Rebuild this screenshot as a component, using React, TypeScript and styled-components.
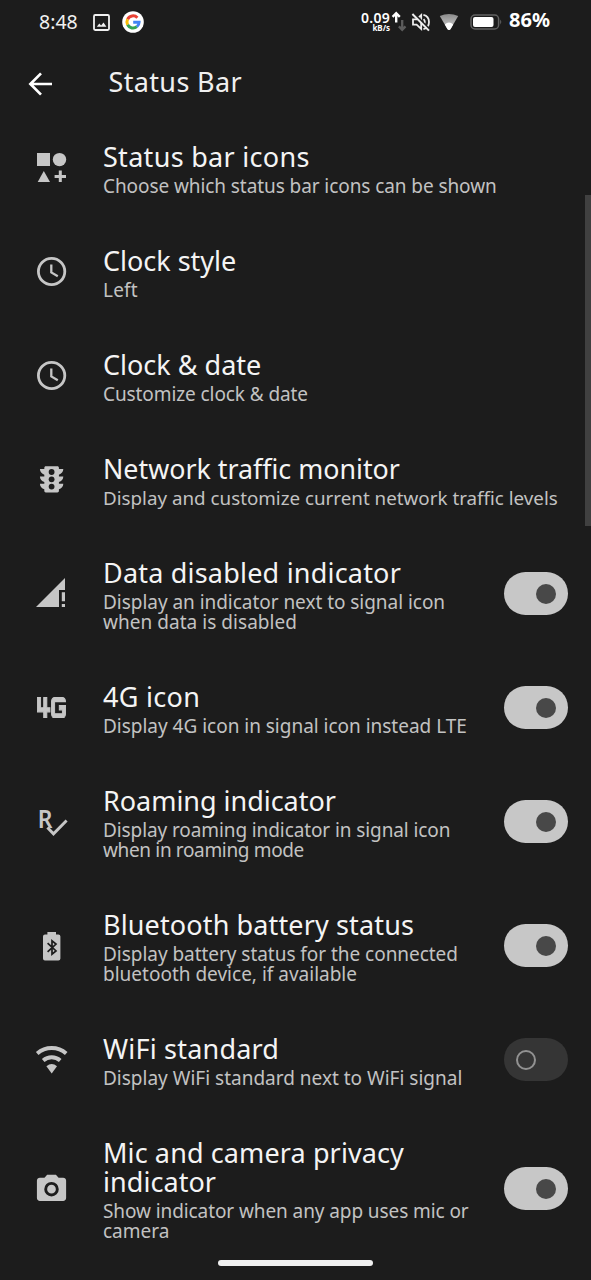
import React from 'react';
import styled, { createGlobalStyle } from 'styled-components';
import { Md4gMobiledata } from 'react-icons/md';

const bg = '#1c1c1c';
const iconGray = '#c6c6c6';

const GlobalStyle = createGlobalStyle`
  body {
    margin: 0;
    background: ${bg};
    font-family: 'Noto Sans', 'Open Sans', sans-serif;
  }
`;

const Screen = styled.main`
  position: relative;
  width: 591px;
  height: 1280px;
  overflow: hidden;
  background: ${bg};
`;

const StatusBar = styled.div`
  display: flex;
  justify-content: space-between;
  height: 44px;
  padding: 0 41px 0 39px;
`;

const StatusGroup = styled.div`
  display: flex;
  align-items: center;
  height: 44px;
`;

const Time = styled.span`
  width: 54px;
  padding-bottom: 1px;
  font-size: 19.5px;
  line-height: 24px;
  color: #f0f0f0;
`;

const Speed = styled.div`
  display: flex;
  flex-direction: column;
  align-items: flex-end;
  width: 31px;
  color: #fff;
  font-weight: 600;
`;

const SpeedValue = styled.span`
  font-size: 14px;
  line-height: 12px;
  letter-spacing: 0.3px;
`;

const SpeedUnit = styled.span`
  font-size: 8px;
  line-height: 8px;
  font-weight: 700;
`;

const Percent = styled.span`
  width: 41px;
  margin-left: 6px;
  padding-bottom: 4px;
  font-size: 20px;
  line-height: 24px;
  font-weight: 700;
  color: #fff;
`;

const Glyph = styled.svg<{ $gap?: number }>`
  display: block;
  flex: none;
  margin-left: ${(p) => p.$gap ?? 0}px;
`;

const Header = styled.header`
  box-sizing: border-box;
  display: flex;
  align-items: center;
  height: 71px;
  padding: 9px 0 0 28px;
`;

const PageTitle = styled.h1`
  margin: 0 0 0 54.5px;
  padding-bottom: 4px;
  font-size: 27px;
  line-height: 30px;
  font-weight: 400;
  letter-spacing: 0.35px;
  color: #f0f0f0;
`;

const List = styled.ul`
  display: flex;
  flex-direction: column;
  margin: 0;
  padding: 0;
  list-style: none;
`;

const Item = styled.li`
  display: flex;
  align-items: center;
  padding: 0 23px 0 34px;
`;

const IconSlot = styled.div`
  display: flex;
  flex: none;
  width: 69px;
  color: ${iconGray};
`;

const Labels = styled.div`
  display: flex;
  flex: 1;
  flex-direction: column;
  min-width: 0;
  padding: 27px 0 23px;
`;

const TitleLine = styled.span<{ $track?: number; $size?: number }>`
  font-size: ${(p) => p.$size ?? 27}px;
  line-height: 29px;
  letter-spacing: ${(p) => (p.$track ? `${p.$track}px` : 'normal')};
  white-space: nowrap;
  color: #f4f4f4;
`;

const Summary = styled.div`
  display: flex;
  flex-direction: column;
  margin-top: 5px;
`;

const SummaryLine = styled.span<{ $track?: number; $size?: number }>`
  font-size: ${(p) => p.$size ?? 19}px;
  line-height: 20px;
  letter-spacing: ${(p) => (p.$track ? `${p.$track}px` : 'normal')};
  white-space: nowrap;
  color: #c2c2c2;
`;

const Track = styled.button<{ $on: boolean }>`
  display: flex;
  flex: none;
  align-items: center;
  justify-content: ${(p) => (p.$on ? 'flex-end' : 'flex-start')};
  width: 64px;
  height: 43px;
  margin-top: 1px;
  padding: 1px 12px 0;
  border: 0;
  border-radius: 22px;
  background: ${(p) => (p.$on ? '#c7c7c7' : '#353535')};
`;

const Knob = styled.span<{ $on: boolean }>`
  box-sizing: border-box;
  flex: none;
  width: 20px;
  height: 20px;
  border-radius: 50%;
  border: ${(p) => (p.$on ? '0' : '2px solid #929292')};
  background: ${(p) => (p.$on ? '#484848' : 'transparent')};
`;

const ScrollThumb = styled.div`
  position: absolute;
  top: 195px;
  right: 0;
  width: 6px;
  height: 331px;
  background: #404040;
`;

const HomePill = styled.div`
  position: absolute;
  bottom: 14px;
  left: 218px;
  width: 155px;
  height: 6px;
  border-radius: 3px;
  background: #f0f0f0;
`;

const FourG = styled(Md4gMobiledata)`
  width: 29px;
  height: 21.5px;
  margin: 1px 0 0 3px;
`;

const Icon = ({ children }: { children: React.ReactNode }) => (
  <Glyph width="36" height="36" viewBox="0 0 36 36" fill="currentColor">
    {children}
  </Glyph>
);

const ShapesIcon = () => (
  <Icon>
    <rect x="3" y="4" width="13" height="13" />
    <circle cx="25.5" cy="10.6" r="6.7" />
    <path d="M9.8 22L16 33H3.7Z" />
    <path d="M26.3 21.5V33.1M20.6 27.4H32" stroke="currentColor" strokeWidth="3" />
  </Icon>
);

const ClockIcon = () => (
  <Icon>
    <circle cx="17.6" cy="18.5" r="13.2" fill="none" stroke="currentColor" strokeWidth="2.8" />
    <path d="M17.3 11.5V19.4L23.8 23.2" fill="none" stroke="currentColor" strokeWidth="2.3" />
  </Icon>
);

const TrafficIcon = () => (
  <Icon>
    <path
      transform="translate(0.1 0.8) scale(1.46)"
      d="M20 10h-3V8.86c1.72-.45 3-2 3-3.86h-3V4c0-.55-.45-1-1-1H8c-.55 0-1 .45-1 1v1H4c0 1.86 1.28 3.41 3 3.86V10H4c0 1.86 1.28 3.41 3 3.86V15H4c0 1.86 1.28 3.41 3 3.86V20c0 .55.45 1 1 1h8c.55 0 1-.45 1-1v-1.14c1.72-.45 3-2 3-3.86h-3v-1.14c1.72-.45 3-2 3-3.86z"
    />
    <g fill={bg}>
      <circle cx="17.6" cy="11" r="2.9" />
      <circle cx="17.6" cy="18.3" r="2.9" />
      <circle cx="17.6" cy="25.6" r="2.9" />
    </g>
  </Icon>
);

const SignalIcon = () => (
  <Icon>
    <path d="M2 32L31 3V15H25V32Z" />
    <path d="M27.8 17.3H31V26.3H27.8ZM27.8 29H31V32H27.8Z" />
  </Icon>
);

const FourGIcon = () => (
  <FourG
    viewBox="2.7 6.7 18.6 10.6"
    preserveAspectRatio="none"
    stroke="currentColor"
    strokeWidth="0.6"
  />
);

const RoamingIcon = () => (
  <Icon>
    <text transform="translate(3.8 24.8) scale(0.88 1)" fontSize="26" fontWeight="600">
      R
    </text>
    <path d="M12 23.2L19.5 30.8L31.6 18.2" fill="none" stroke={bg} strokeWidth="2.4" />
    <path d="M13.4 24.4L19.5 30.8L32.6 17.6" fill="none" stroke="currentColor" strokeWidth="2.9" />
  </Icon>
);

const BatteryBluetoothIcon = () => (
  <Icon>
    <path d="M13.4 5H22V7.6H24.4Q26.4 7.6 26.4 9.6V31.4Q26.4 33.4 24.4 33.4H11Q9 33.4 9 31.4V9.6Q9 7.6 11 7.6H13.4Z" />
    <path
      d="M13.6 16.1L22 24L18 27.2V13.8L22 17L13.6 24.9"
      fill="none"
      stroke={bg}
      strokeWidth="1.7"
    />
  </Icon>
);

const WifiIcon = () => (
  <Icon>
    <g fill="none" stroke="currentColor" strokeWidth="4">
      <path d="M3.2 12.4A22.4 22.4 0 0 1 32.2 12.4" />
      <path d="M9.2 19.4A13 13 0 0 1 26.2 19.4" />
    </g>
    <path d="M12.4 25.2Q17.7 21 23 25.2L17.7 32.6Z" />
  </Icon>
);

const CameraIcon = () => (
  <Icon>
    <path
      transform="translate(0 1.8) scale(1.46)"
      d="M9 2L7.17 4H4c-1.1 0-2 .9-2 2v12c0 1.1.9 2 2 2h16c1.1 0 2-.9 2-2V6c0-1.1-.9-2-2-2h-3.17L15 2z"
    />
    <circle cx="17.5" cy="19.2" r="5.8" fill="none" stroke={bg} strokeWidth="2.9" />
  </Icon>
);

type Line = { text: string; track?: number; size?: number };
type Setting = { icon: React.ReactNode; title: Line[]; summary: Line[]; on?: boolean };

const settings: Setting[] = [
  {
    icon: <ShapesIcon />,
    title: [{ text: 'Status bar icons', track: 0.3 }],
    summary: [{ text: 'Choose which status bar icons can be shown', track: -0.08 }],
  },
  {
    icon: <ClockIcon />,
    title: [{ text: 'Clock style', track: -0.02 }],
    summary: [{ text: 'Left', track: 0.2 }],
  },
  {
    icon: <ClockIcon />,
    title: [{ text: 'Clock & date' }],
    summary: [{ text: 'Customize clock & date', track: -0.09 }],
  },
  {
    icon: <TrafficIcon />,
    title: [{ text: 'Network traffic monitor', size: 26.8 }],
    summary: [{ text: 'Display and customize current network traffic levels', size: 18.8 }],
  },
  {
    icon: <SignalIcon />,
    title: [{ text: 'Data disabled indicator', track: 0.2 }],
    summary: [
      { text: 'Display an indicator next to signal icon', track: -0.04 },
      { text: 'when data is disabled', track: 0.04 },
    ],
    on: true,
  },
  {
    icon: <FourGIcon />,
    title: [{ text: '4G icon', track: 0.3 }],
    summary: [{ text: 'Display 4G icon in signal icon instead LTE', track: -0.02 }],
    on: true,
  },
  {
    icon: <RoamingIcon />,
    title: [{ text: 'Roaming indicator', track: -0.03 }],
    summary: [
      { text: 'Display roaming indicator in signal icon', track: -0.1 },
      { text: 'when in roaming mode', track: -0.35 },
    ],
    on: true,
  },
  {
    icon: <BatteryBluetoothIcon />,
    title: [{ text: 'Bluetooth battery status', track: 0.13 }],
    summary: [
      { text: 'Display battery status for the connected', track: -0.04 },
      { text: 'bluetooth device, if available' },
    ],
    on: true,
  },
  {
    icon: <WifiIcon />,
    title: [{ text: 'WiFi standard', track: 0.2 }],
    summary: [{ text: 'Display WiFi standard next to WiFi signal' }],
    on: false,
  },
  {
    icon: <CameraIcon />,
    title: [
      { text: 'Mic and camera privacy', track: 0.11 },
      { text: 'indicator', track: 0.05 },
    ],
    summary: [{ text: 'Show indicator when any app uses mic or', track: -0.09 }, { text: 'camera' }],
    on: true,
  },
];

const SettingRow = ({ icon, title, summary, on }: Setting) => (
  <Item>
    <IconSlot>{icon}</IconSlot>
    <Labels>
      {title.map((l) => (
        <TitleLine key={l.text} $track={l.track} $size={l.size}>
          {l.text}
        </TitleLine>
      ))}
      <Summary>
        {summary.map((l) => (
          <SummaryLine key={l.text} $track={l.track} $size={l.size}>
            {l.text}
          </SummaryLine>
        ))}
      </Summary>
    </Labels>
    {on !== undefined && (
      <Track $on={on} role="switch" aria-checked={on} aria-label={title[0].text}>
        <Knob $on={on} />
      </Track>
    )}
  </Item>
);

export default function App() {
  return (
    <Screen>
      <GlobalStyle />
      <StatusBar>
        <StatusGroup>
          <Time>8:48</Time>
          <Glyph width="17" height="17" viewBox="0 0 17 17">
            <rect x="1" y="1" width="15" height="15" rx="1.2" fill="none" stroke="#f0f0f0" strokeWidth="1.8" />
            <path d="M3.8 12.8L6.3 9.6L8.1 11.5L10.5 8.5L13.4 12.8Z" fill="#f0f0f0" />
          </Glyph>
          <Glyph $gap={12} width="22" height="22" viewBox="0 0 22 22">
            <circle cx="11" cy="11" r="10.8" fill="#fff" />
            <g fill="none" strokeWidth="3">
              <path d="M15.4 6.7A6.1 6.1 0 0 0 5.6 8.2" stroke="#e94235" />
              <path d="M5.6 8.2A6.1 6.1 0 0 0 5.6 13.8" stroke="#fabb05" />
              <path d="M5.6 13.8A6.1 6.1 0 0 0 14.9 15.7" stroke="#34a353" />
              <path d="M14.9 15.7A6.1 6.1 0 0 0 17.1 11.2H11.2" stroke="#4285f4" />
            </g>
          </Glyph>
        </StatusGroup>
        <StatusGroup>
          <Speed>
            <SpeedValue>0.09</SpeedValue>
            <SpeedUnit>kB/s</SpeedUnit>
          </Speed>
          <Glyph $gap={1} width="16" height="22" viewBox="0 0 16 22" fill="none">
            <path d="M5.2 11.6V3M1.6 5.8L5.2 2.2L8.8 5.8" stroke="#fff" strokeWidth="2.4" />
            <path d="M11.2 9V18.5M7.9 15.4L11.2 18.8L14.5 15.4" stroke="#5c5c5c" strokeWidth="2.3" />
          </Glyph>
          <Glyph $gap={4} width="20" height="20" viewBox="0 0 20 20" fill="none">
            <g stroke="#ececec" strokeWidth="1.8">
              <path d="M2 7.3H5.6L10.2 3V17L5.6 12.7H2Z" />
              <path d="M12.6 7.2Q15 10 12.6 12.8M12.4 2.9A7.3 7.3 0 0 1 12.4 17.1" />
            </g>
            <path d="M3 1.4L19 17.6" stroke={bg} strokeWidth="2" />
            <path d="M1.4 2L18 18.6" stroke="#ececec" strokeWidth="2" />
          </Glyph>
          <Glyph $gap={8} width="20" height="18" viewBox="0 0 20 18">
            <defs>
              <linearGradient id="wifi-fade" x1="0" y1="0" x2="0" y2="1">
                <stop offset="0" stopColor="#8a8a8a" />
                <stop offset="1" stopColor="#d6d6d6" />
              </linearGradient>
            </defs>
            <path d="M.8 3Q10 -1 19.2 3L11.6 16Q10 18.2 8.4 16Z" fill="url(#wifi-fade)" />
            <path d="M5.8 11.4Q10 7.4 14.2 11.4L11.6 16Q10 18.2 8.4 16Z" fill="#fff" />
          </Glyph>
          <Glyph $gap={11} width="33" height="16" viewBox="0 0 33 16">
            <rect x="1" y="1" width="27.6" height="14" rx="4" fill="none" stroke="#626262" strokeWidth="1.5" />
            <path d="M30.2 5.6Q32.4 8 30.2 10.4Z" fill="#626262" />
            <rect x="3" y="3" width="20.5" height="10" rx="2" fill="#fff" />
          </Glyph>
          <Percent>86%</Percent>
        </StatusGroup>
      </StatusBar>
      <Header>
        <Glyph width="26" height="26" viewBox="0 0 26 26" fill="none">
          <path d="M24 13H2.6M13 2.4L2.4 13L13 23.6" stroke="#fff" strokeWidth="2.7" />
        </Glyph>
        <PageTitle>Status Bar</PageTitle>
      </Header>
      <List>
        {settings.map((s) => (
          <SettingRow key={s.title[0].text} {...s} />
        ))}
      </List>
      <ScrollThumb />
      <HomePill />
    </Screen>
  );
}
